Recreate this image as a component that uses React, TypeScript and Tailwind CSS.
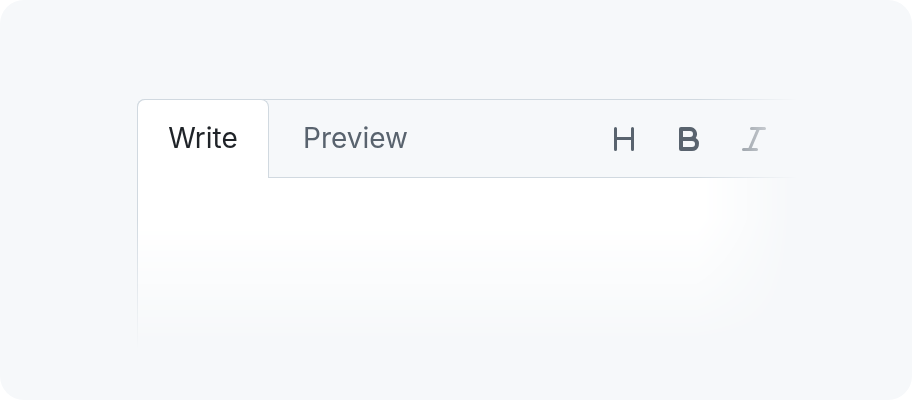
import React from "react";

function HeadingIcon() {
  return (
    <svg viewBox="0 0 16 16" width="32" height="32" fill="currentColor">
      <path d="M3.75 2a.75.75 0 0 1 .75.75V7h7V2.75a.75.75 0 0 1 1.5 0v10.5a.75.75 0 0 1-1.5 0V8.5h-7v4.75a.75.75 0 0 1-1.5 0V2.75A.75.75 0 0 1 3.75 2Z" />
    </svg>
  );
}

function BoldIcon() {
  return (
    <svg viewBox="0 0 16 16" width="32" height="32" fill="currentColor">
      <path d="M4 2h4.5a3.501 3.501 0 0 1 2.852 5.53A3.499 3.499 0 0 1 9.5 14H4a1 1 0 0 1-1-1V3a1 1 0 0 1 1-1Zm1 7v3h4.5a1.5 1.5 0 0 0 0-3Zm3.5-2a1.5 1.5 0 0 0 0-3H5v3Z" />
    </svg>
  );
}

function ItalicIcon() {
  return (
    <svg viewBox="0 0 16 16" width="32" height="32" fill="currentColor">
      <path d="M6 2.75A.75.75 0 0 1 6.75 2h6.5a.75.75 0 0 1 0 1.5h-2.505l-3.858 9H9.25a.75.75 0 0 1 0 1.5h-6.5a.75.75 0 0 1 0-1.5h2.505l3.858-9H6.75A.75.75 0 0 1 6 2.75Z" />
    </svg>
  );
}

export default function App() {
  return (
    <div className="w-[912px] h-[400px] bg-white font-['Inter',sans-serif]">
      <div className="w-full h-full rounded-[24px] bg-[#f6f8fa] pt-[99px] pl-[137px]">
        <div className="w-[680px] h-[250px] flex flex-col [mask-image:linear-gradient(to_right,black_560px,transparent_660px),linear-gradient(to_bottom,black_120px,transparent_250px)] [mask-composite:intersect]">
          {/* tab bar */}
          <div className="flex h-[79px] border-t border-[#d1d9e0] rounded-tl-lg">
            <div className="w-[132px] -mt-px h-[79px] pb-[3px] flex items-center justify-center bg-white border border-b-0 border-[#d1d9e0] rounded-t-lg text-[28px] text-[#1f2328]">
              Write
            </div>
            <div className="flex-1 flex items-center border-b border-[#d1d9e0] text-[#59636e]">
              <span className="ml-[34px] pb-[2px] text-[28px]">Preview</span>
              <div className="ml-[200px] flex items-center gap-[33px]">
                <HeadingIcon />
                <BoldIcon />
                <ItalicIcon />
              </div>
            </div>
          </div>
          {/* text area */}
          <div className="flex-1 bg-white border-l border-[#d1d9e0]"></div>
        </div>
      </div>
    </div>
  );
}
